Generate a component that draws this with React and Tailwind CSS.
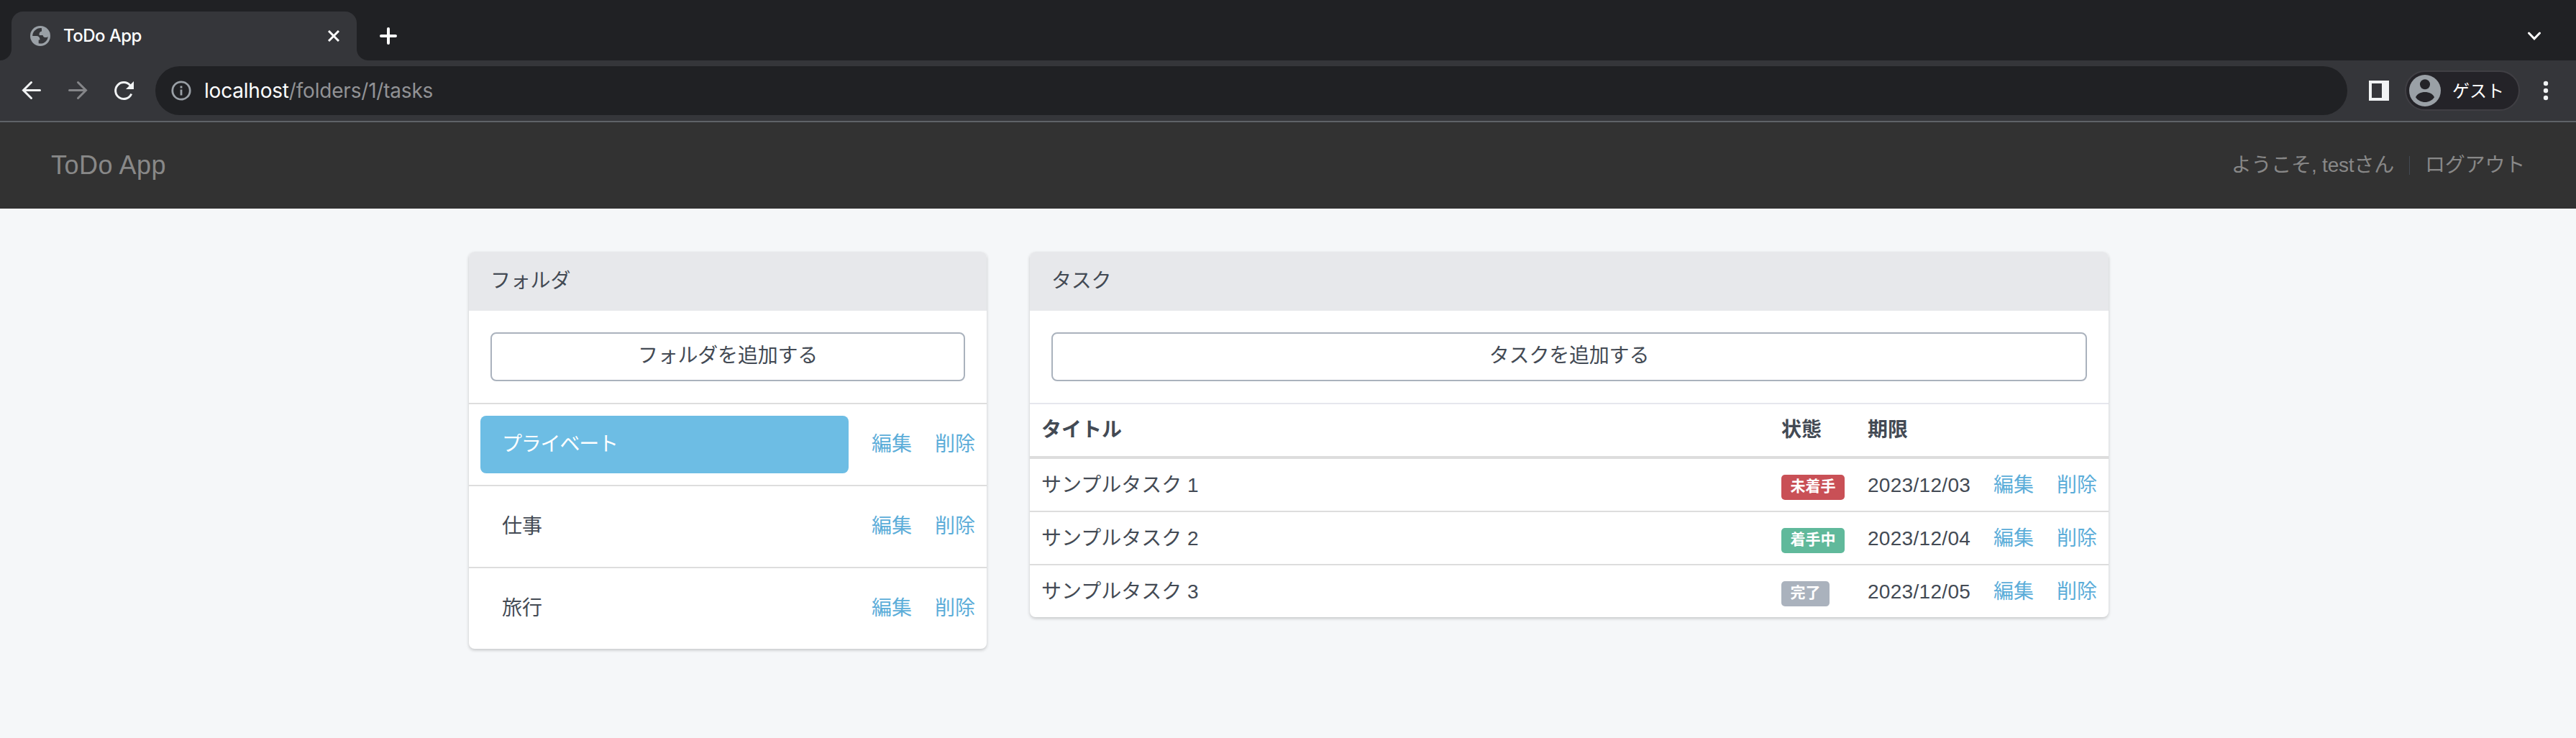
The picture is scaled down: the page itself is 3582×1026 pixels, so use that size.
import React from 'react';

const folders = [
  { name: 'プライベート', active: true },
  { name: '仕事', active: false },
  { name: '旅行', active: false },
];

const tasks = [
  { title: 'サンプルタスク 1', status: '未着手', badge: 'bg-[#c95056]', due: '2023/12/03' },
  { title: 'サンプルタスク 2', status: '着手中', badge: 'bg-[#60b99b]', due: '2023/12/04' },
  { title: 'サンプルタスク 3', status: '完了', badge: 'bg-[#aab2bd]', due: '2023/12/05' },
];

function GlobeIcon() {
  return (
    <svg viewBox="0 0 28 28" className="size-7 shrink-0">
      <circle cx="14" cy="14" r="14" fill="#9aa0a6" />
      <path
        d="M16 3.2C9.500 2.200 3.200 7.500 3.200 14h5.600c2.600 0 4.600 1.900 4.600 4.400v1h-1.700v4.900c6.700 1.600 12.700-3.200 13-9.600-.8 1-1.700 1.400-3 1.400-2.400 0-4.100-1.200-4.100-3.200h-4.800c-.8-3.200 1-5.300 3.200-5.500Z"
        fill="#35363a"
      />
    </svg>
  );
}

function Tab() {
  return (
    <div className="flex h-[84px] items-end bg-[#202124]">
      <div className="size-4 bg-[#35363a]">
        <div className="size-4 rounded-br-[16px] bg-[#202124]" />
      </div>
      <div className="flex h-[68px] w-[480px] items-center rounded-t-[16px] bg-[#35363a] pr-6 pl-[26px]">
        <GlobeIcon />
        <span className="ml-[18px] flex-1 text-[24px] leading-none font-medium tracking-[-0.55px] text-white">ToDo App</span>
        <svg viewBox="0 0 16 16" className="size-4" stroke="#fff" strokeWidth="3">
          <path d="M1 1l14 14M15 1L1 15" />
        </svg>
      </div>
      <div className="size-4 bg-[#35363a]">
        <div className="size-4 rounded-bl-[16px] bg-[#202124]" />
      </div>
      <div className="flex h-[68px] flex-1 items-center justify-between pr-[48px] pl-4">
        <svg viewBox="0 0 24 24" className="size-6" stroke="#fff" strokeWidth="4" strokeLinecap="round">
          <path d="M12 2v20M2 12h20" />
        </svg>
        <svg viewBox="0 0 20 12" className="h-3 w-5" fill="none" stroke="#fff" strokeWidth="3" strokeLinecap="round">
          <path d="M2.500 2l7.500 7.800L17.500 2" />
        </svg>
      </div>
    </div>
  );
}

function Toolbar() {
  return (
    <div className="flex h-[86px] items-center border-b-2 border-[#5f6368] bg-[#35363a] pl-7">
      <svg viewBox="0 0 32 32" className="size-8" fill="none" stroke="#f1f3f4" strokeWidth="3" strokeLinecap="round">
        <path d="M27.500 15.500H5M15.500 4.500L4.500 15.500l11 11" />
      </svg>
      <svg viewBox="0 0 32 32" className="ml-8 size-8" fill="none" stroke="#858689" strokeWidth="3" strokeLinecap="round">
        <path d="M4.500 15.500h22.500M16.500 4.500l11 11-11 11" />
      </svg>
      <svg viewBox="0 0 32 32" className="ml-8 size-8" fill="none" stroke="#f1f3f4" strokeWidth="3">
        <path d="M26.700 20.500A11.500 11.500 0 1 1 25 8.700" />
        <path d="M30 3v11H19Z" fill="#f1f3f4" stroke="none" />
      </svg>
      <div className="ml-7 flex h-[68px] w-[3048px] items-center rounded-full bg-[#202124] pl-[22px]">
        <svg viewBox="0 0 28 28" className="size-7" fill="none" stroke="#9aa0a6" strokeWidth="2.800">
          <circle cx="14" cy="14" r="12.200" />
          <path d="M14 12.500v8M14 7.500v3" />
        </svg>
        <span className="ml-[18px] text-[28px] leading-none tracking-[-0.2px] text-[#919295]">
          <span className="text-white">localhost</span>/folders/1/tasks
        </span>
      </div>
      <svg viewBox="0 0 28 28" className="ml-[30px] size-7">
        <path d="M0 0h28v28H0ZM4 4v20h14V4Z" fill="#f1f3f4" fillRule="evenodd" />
      </svg>
      <div className="ml-[22px] flex h-14 w-[160px] items-center rounded-full border-2 border-[#403f44] bg-[#242328] pl-1">
        <svg viewBox="0 0 44 44" className="size-11">
          <circle cx="22" cy="22" r="22" fill="#9aa0a6" />
          <circle cx="22" cy="13.300" r="7" fill="#242328" />
          <path d="M9 31.200C11 26.500 16.500 24 22 24s11 2.500 13 7.200C32 35.500 27 38 22 38s-10-2.500-13-6.800Z" fill="#242328" />
        </svg>
        <span className="ml-4 pt-px text-[24px] leading-none text-white">ゲスト</span>
      </div>
      <svg viewBox="0 0 8 28" className="ml-8 h-7 w-2" fill="#f1f3f4">
        <circle cx="4" cy="4" r="3.200" />
        <circle cx="4" cy="14" r="3.200" />
        <circle cx="4" cy="24" r="3.200" />
      </svg>
    </div>
  );
}

function Panel({ title, children, className }) {
  return (
    <section className={`overflow-hidden rounded-lg bg-white shadow-[0_2px_4px_rgba(0,0,0,0.2)] ${className}`}>
      <h2 className="h-[82px] bg-[#e7e8eb] px-[30px] pt-5 leading-[42px] tracking-[-0.2px]">{title}</h2>
      {children}
    </section>
  );
}

function AddButton({ children }) {
  return (
    <div className="p-[30px]">
      <button className="block h-[68px] w-full rounded-lg border-2 border-[#aab2bd] pb-0.5 text-center tracking-[-0.2px]">{children}</button>
    </div>
  );
}

export default function App() {
  return (
    <div className="h-[1026px] w-[3582px] overflow-hidden bg-[#f5f7f9] font-['Liberation_Sans','Noto_Sans_CJK_JP',sans-serif] text-[28px] leading-[40px] text-[#434a54]">
      <header className="font-[Inter,'Noto_Sans_CJK_JP',sans-serif]">
        <Tab />
        <Toolbar />
      </header>

      <nav className="flex h-[120px] items-center justify-between bg-[#323232] pr-[71px] pl-[71px] text-[#888888]">
        <a className="text-[36px] tracking-[0.5px]">ToDo App</a>
        <div className="flex items-center">
          <span className="tracking-[-0.2px]">ようこそ, testさん</span>
          <span className="mr-[21px] ml-[21px] h-[26px] w-px bg-[#434a54]" />
          <a className="tracking-[-0.2px]">ログアウト</a>
        </div>
      </nav>

      <main className="flex items-start gap-[60px] pt-[60px] pl-[652px]">
        <Panel title="フォルダ" className="w-[720px]">
          <AddButton>フォルダを追加する</AddButton>
          <ul>
            {folders.map((f) => (
              <li key={f.name} className="flex h-[114px] items-center border-t-2 border-[#dddddd] px-4">
                <a
                  className={
                    f.active
                      ? 'flex h-20 w-[512px] items-center rounded-lg bg-[#6dbde4] px-[30px] tracking-[-1.2px] text-white'
                      : 'flex h-20 w-[512px] items-center px-[30px]'
                  }
                >
                  {f.name}
                </a>
                <a className="ml-8 text-[#5badd9]">編集</a>
                <a className="ml-8 text-[#5badd9]">削除</a>
              </li>
            ))}
          </ul>
        </Panel>

        <Panel title="タスク" className="w-[1500px]">
          <AddButton>タスクを追加する</AddButton>
          <table className="w-full table-fixed border-separate border-spacing-0 text-left">
            <colgroup>
              <col />
              <col className="w-[120px]" />
              <col className="w-[175px]" />
              <col className="w-[88px]" />
              <col className="w-[88px]" />
            </colgroup>
            <thead>
              <tr className="h-[78px]">
                {['タイトル', '状態', '期限', '', ''].map((h, i) => (
                  <th key={i} className="border-t-2 border-b-4 border-t-[#e6e7ed] border-b-[#dddddd] p-0 pl-4 font-bold">
                    {h}
                  </th>
                ))}
              </tr>
            </thead>
            <tbody className="[&>tr:first-child>td]:border-t-0 [&>tr:first-child]:h-[72px]">
              {tasks.map((t) => (
                <tr key={t.title} className="h-[74px] [&>td]:border-t-2 [&>td]:border-[#dddddd] [&>td]:p-0 [&>td]:pt-px [&>td]:pl-4">
                  <td>{t.title}</td>
                  <td>
                    <div className="flex pt-[5px]">
                      <span className={`h-[35px] rounded-[5px] px-[12.5px] text-[21px] leading-[32px] font-bold text-white ${t.badge}`}>
                        {t.status}
                      </span>
                    </div>
                  </td>
                  <td className="tracking-[0.3px]">{t.due}</td>
                  <td className="text-[#5badd9]">編集</td>
                  <td className="text-[#5badd9]">削除</td>
                </tr>
              ))}
            </tbody>
          </table>
        </Panel>
      </main>
    </div>
  );
}
